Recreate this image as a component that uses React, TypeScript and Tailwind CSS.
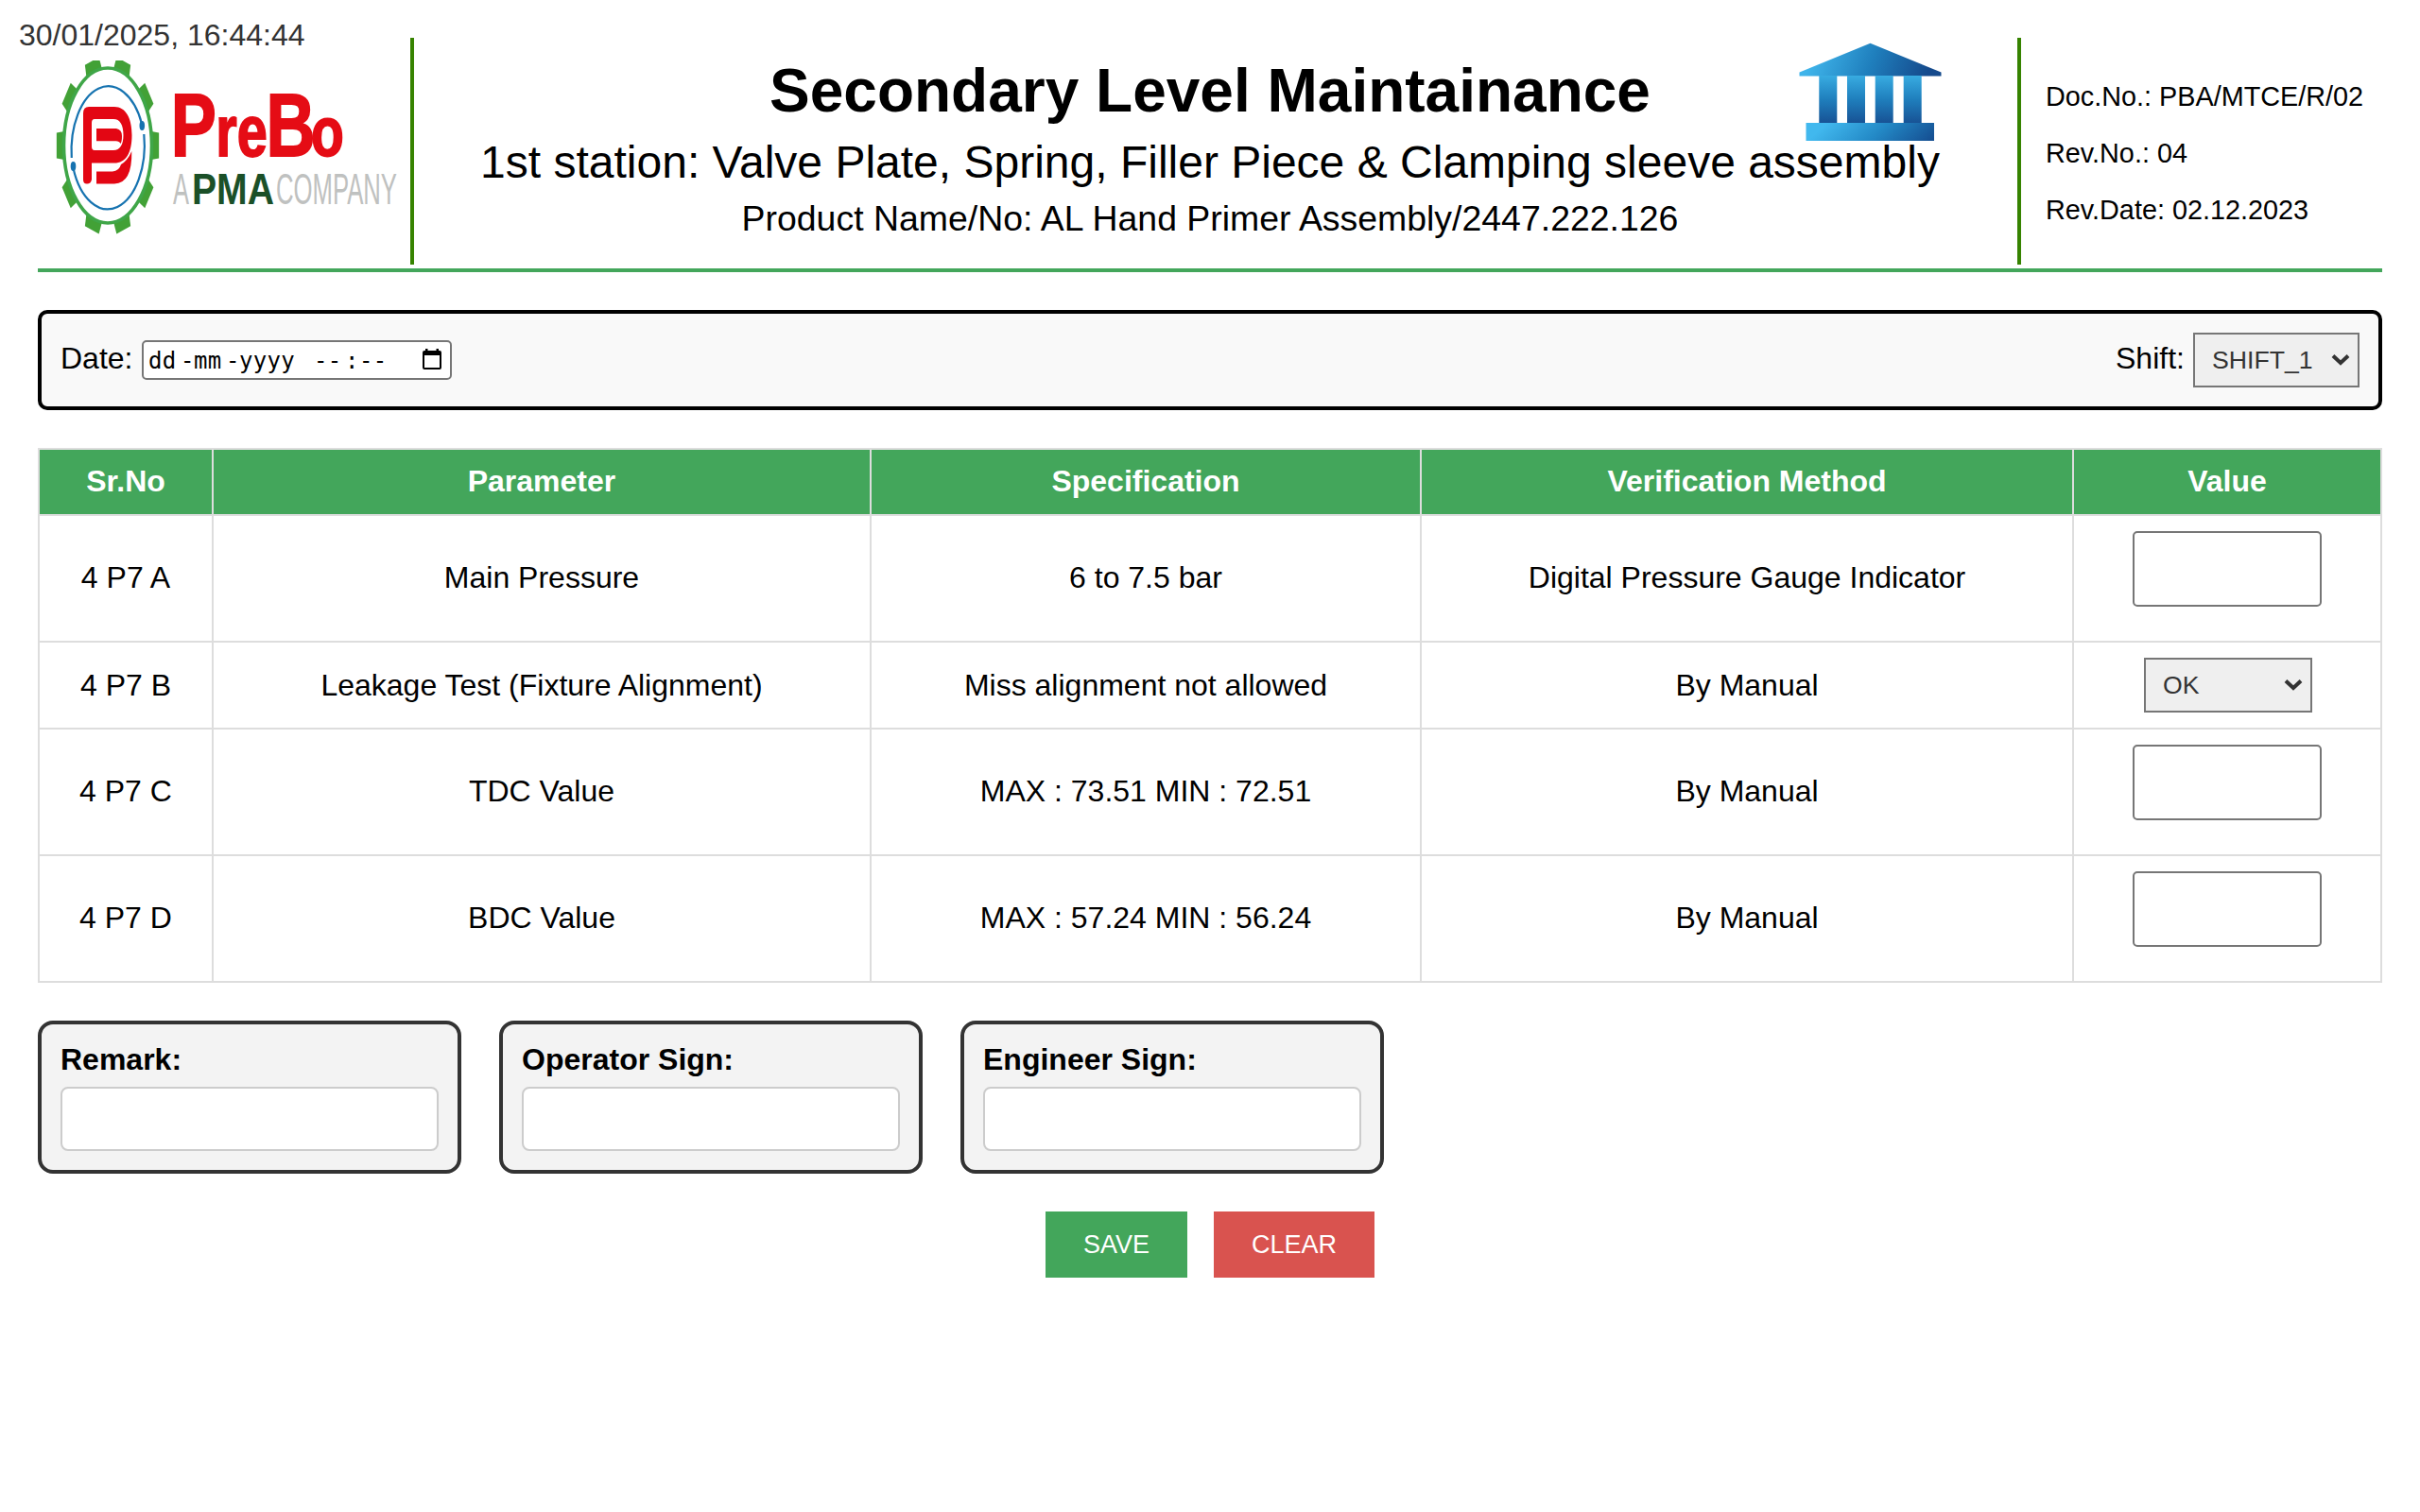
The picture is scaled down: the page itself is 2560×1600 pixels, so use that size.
import React from "react";

const rows = [
  { id: "4 P7 A", parameter: "Main Pressure", spec: "6 to 7.5 bar", method: "Digital Pressure Gauge Indicator", input: true },
  { id: "4 P7 B", parameter: "Leakage Test (Fixture Alignment)", spec: "Miss alignment not allowed", method: "By Manual", input: false },
  { id: "4 P7 C", parameter: "TDC Value", spec: "MAX : 73.51 MIN : 72.51", method: "By Manual", input: true },
  { id: "4 P7 D", parameter: "BDC Value", spec: "MAX : 57.24 MIN : 56.24", method: "By Manual", input: true },
];

const teeth = [0, 36, 72, 108, 144, 180, 216, 252, 288, 324];

function Logo() {
  return (
    <svg width="370" height="190" viewBox="58 60 370 190" className="block shrink-0 font-['Liberation_Sans']">
      <clipPath id="gearClip">
        <rect x="58" y="64" width="120" height="190" />
      </clipPath>
      <g clipPath="url(#gearClip)">
        <g transform="translate(114 154) scale(0.576 1)">
          {teeth.map((a) => (
            <path key={a} d="M80 -15 L94 -13.5 L94 13.5 L80 15 Z" transform={`rotate(${a})`} fill="#42a136" />
          ))}
        </g>
        <ellipse cx="114" cy="154" rx="46.5" ry="82" fill="#fff" stroke="#3fa648" strokeWidth="3.6" />
        <path d="M75.8 167 A39 68 0 0 1 150 131" fill="none" stroke="#1673b0" strokeWidth="2.2" />
        <path d="M152.3 142 A39 68 0 0 1 77.5 178" fill="none" stroke="#1673b0" strokeWidth="2.2" />
        <ellipse cx="150.3" cy="133" rx="2.8" ry="5" fill="#1673b0" />
        <ellipse cx="77.5" cy="176" rx="2.8" ry="5" fill="#1673b0" />
        <path
          d="M88 120 Q88 113 94 113 L121 113 C133 113 139.500 125 139.500 143 C139.500 162 133 172.500 121 172.500 L97 172.500 L97 190 Q96 194.500 92 194.500 Q88 194.500 88 190 Z M100 126 Q97 126 97 130 L97 155 Q97 159 100 159 L120 159 C127 159 130.500 153 130.500 143 C130.500 132 127 126 120 126 Z"
          fill="#e30613"
          fillRule="evenodd"
        />
        <path d="M102 136 L123 136 Q129 137 129 144 Q129 150 127.500 152 Q126 149 122 149.300 L102 149.300 Z" fill="#e30613" />
        <path d="M139.300 160 Q140 194 121 194.500 L102 194.500 L102 181.500 L119 181.500 Q126 181 128 174 Q135 170 139.300 160 Z" fill="#e30613" />
      </g>
      <text transform="scale(0.76 1)" y="165" fontWeight="700" fill="#e50c15" stroke="#e50c15" strokeWidth="1.8">
        <tspan x="237.800" fontSize="95">P</tspan>
        <tspan x="300.500" fontSize="76">re</tspan>
        <tspan x="370.500" fontSize="95">B</tspan>
        <tspan x="433" fontSize="75">o</tspan>
      </text>
      <text x="183" y="215.500" fontSize="47" fill="#bfc1c0" textLength="17" lengthAdjust="spacingAndGlyphs">A</text>
      <text x="203" y="215.500" fontSize="47" fontWeight="700" fill="#1b5028" textLength="87" lengthAdjust="spacingAndGlyphs">PMA</text>
      <text x="292" y="215.500" fontSize="47" fill="#bfc1c0" textLength="128" lengthAdjust="spacingAndGlyphs">COMPANY</text>
    </svg>
  );
}

function HomeIcon() {
  return (
    <svg width="156" height="108" viewBox="0 0 156 108" className="absolute left-[1462px] top-[4px]">
      <defs>
        <linearGradient id="roof" gradientUnits="userSpaceOnUse" x1="20" y1="10" x2="130" y2="55">
          <stop offset="0" stopColor="#3fb4ea" />
          <stop offset="0.5" stopColor="#1f7fbd" />
          <stop offset="1" stopColor="#154a8c" />
        </linearGradient>
        <linearGradient id="pillar" gradientUnits="userSpaceOnUse" x1="0" y1="34" x2="0" y2="88">
          <stop offset="0" stopColor="#3aafe4" />
          <stop offset="0.5" stopColor="#1f7fbd" />
          <stop offset="1" stopColor="#174f92" />
        </linearGradient>
        <linearGradient id="base" gradientUnits="userSpaceOnUse" x1="50" y1="70" x2="110" y2="135">
          <stop offset="0" stopColor="#41b8ee" />
          <stop offset="0.5" stopColor="#2389c6" />
          <stop offset="1" stopColor="#154f92" />
        </linearGradient>
      </defs>
      <path d="M78.500 1.700 L153.500 32.500 L153.500 36.500 L3.500 36.500 L3.500 32.500 Z" fill="url(#roof)" />
      <rect x="24.300" y="36" width="19" height="51" fill="url(#pillar)" />
      <rect x="54" y="36" width="19" height="51" fill="url(#pillar)" />
      <rect x="83.700" y="36" width="19" height="51" fill="url(#pillar)" />
      <rect x="113.700" y="36" width="19" height="51" fill="url(#pillar)" />
      <rect x="10.500" y="86" width="135.500" height="19" fill="url(#base)" />
    </svg>
  );
}

function Select({ value, className }: { value: string; className: string }) {
  return (
    <div className={"flex h-[58px] items-center justify-between border-2 border-[#767676] bg-[#efefef] pr-[8px] pl-[18px] text-left text-[26.67px] leading-[30px] text-[#333] " + className}>
      <span>{value}</span>
      <svg width="20" height="14" viewBox="0 0 20 14">
        <path d="M2 2.500 L10 10 L18 2.500" fill="none" stroke="#333" strokeWidth="4" />
      </svg>
    </div>
  );
}

function DateField() {
  return (
    <div className="flex h-[42px] w-[328px] items-center rounded-[5px] border-2 border-[#767676] bg-white pl-[5px] font-['DejaVu_Sans_Mono',monospace] text-[24px] leading-[28px] tracking-[0.3px]">
      <span className="w-[34px] pt-px">dd</span>
      <span className="w-[14px] pt-px">-</span>
      <span className="w-[34px] pt-px">mm</span>
      <span className="w-[14px] pt-px">-</span>
      <span className="w-[79px] pt-px">yyyy</span>
      <span className="w-[33px] pt-px">--</span>
      <span className="w-[15px] pt-px">:</span>
      <span className="w-[67px] pt-px">--</span>
      <svg width="20" height="22" viewBox="0 0 20 22" className="-mt-[2px]">
        <path d="M3 0 h2.500 v2 h9 v-2 h2.500 v2 h1 q2 0 2 2 v16 q0 2 -2 2 h-16 q-2 0 -2 -2 v-16 q0 -2 2 -2 h1 Z M2 7 v13 h16 v-13 Z" fill="#000" fillRule="evenodd" />
      </svg>
    </div>
  );
}

function SignCard({ label }: { label: string }) {
  return (
    <div className="h-[162px] w-[448px] rounded-[16px] border-4 border-[#333] bg-[#f3f3f3] px-5 pt-[19px]">
      <label className="block h-[47px] text-[32px] leading-[37px] font-bold">{label}</label>
      <input className="block h-[68px] w-full rounded-[8px] border-2 border-[#ccc] bg-white px-4" />
    </div>
  );
}

export default function App() {
  return (
    <div className="relative h-[1600px] w-[2560px] overflow-hidden bg-white px-10 pt-10 font-['Liberation_Sans',Arial,sans-serif] text-[32px] leading-[37px] text-black">
      <div className="absolute top-[19px] left-[20px] text-[#333]">30/01/2025, 16:44:44</div>
      <header className="flex h-[248px] border-b-4 border-[#43a65b]">
        <div className="h-[240px] w-[398px] border-r-4 border-[#368300] pt-[20px] pl-[18px]">
          <Logo />
        </div>
        <div className="relative flex h-[240px] w-[1700px] flex-col items-center border-r-4 border-[#368300] pr-[12px] whitespace-nowrap">
          <h1 className="mt-[19px] text-[64px] leading-[74px] font-bold">Secondary Level Maintainance</h1>
          <h2 className="mt-[11px] text-[48px] leading-[56px]">1st station: Valve Plate, Spring, Filler Piece &amp; Clamping sleeve assembly</h2>
          <h3 className="mt-[10px] text-[37.44px] leading-[43px]">Product Name/No: AL Hand Primer Assembly/2447.222.126</h3>
          <HomeIcon />
        </div>
        <div className="flex flex-col pt-[32px] pl-[26px] text-[28.8px] leading-[60px] whitespace-nowrap">
          <p>Doc.No.: PBA/MTCE/R/02</p>
          <p>Rev.No.: 04</p>
          <p>Rev.Date: 02.12.2023</p>
        </div>
      </header>

      <section className="mt-[40px] flex h-[106px] items-start justify-between rounded-[10px] border-4 border-black bg-[#f9f9f9] px-5 pt-5">
        <div className="flex">
          <span className="mt-[9px] w-[86px]">Date:</span>
          <div className="mt-[8px]">
            <DateField />
          </div>
        </div>
        <div className="flex">
          <span className="mt-[9px] w-[82px]">Shift:</span>
          <Select value="SHIFT_1" className="w-[176px]" />
        </div>
      </section>

      <table className="mt-[40px] w-[2480px] table-fixed border-collapse text-center">
        <colgroup>
          <col className="w-[184px]" />
          <col className="w-[696px]" />
          <col className="w-[582px]" />
          <col className="w-[690px]" />
          <col className="w-[326px]" />
        </colgroup>
        <thead>
          <tr className="h-[70px] bg-[#43a65b] text-white">
            {["Sr.No", "Parameter", "Specification", "Verification Method", "Value"].map((h) => (
              <th key={h} className="border-2 border-[#ddd] p-0 pb-[2px] font-bold">{h}</th>
            ))}
          </tr>
        </thead>
        <tbody>
          {rows.map((r) => (
            <tr key={r.id} className={r.input ? "h-[134px]" : "h-[92px]"}>
              {[r.id, r.parameter, r.spec, r.method].map((text) => (
                <td key={text} className={r.input ? "border-2 border-[#ddd] p-0 pb-[2px]" : "border-2 border-[#ddd] p-0"}>{text}</td>
              ))}
              <td className="border-2 border-[#ddd] p-0 pt-4 align-top">
                {r.input ? (
                  <input className="mx-auto block h-[80px] w-[200px] rounded-[5px] border-2 border-[#767676] bg-white px-4" />
                ) : (
                  <Select value="OK" className="ml-[74px] w-[178px]" />
                )}
              </td>
            </tr>
          ))}
        </tbody>
      </table>

      <div className="mt-[40px] flex gap-10">
        <SignCard label="Remark:" />
        <SignCard label="Operator Sign:" />
        <SignCard label="Engineer Sign:" />
      </div>

      <div className="mt-[40px] flex justify-center gap-[28px] text-[27px] leading-[32px] text-white">
        <button className="h-[70px] w-[150px] bg-[#43a65b]">SAVE</button>
        <button className="h-[70px] w-[170px] bg-[#d9534f]">CLEAR</button>
      </div>
    </div>
  );
}
